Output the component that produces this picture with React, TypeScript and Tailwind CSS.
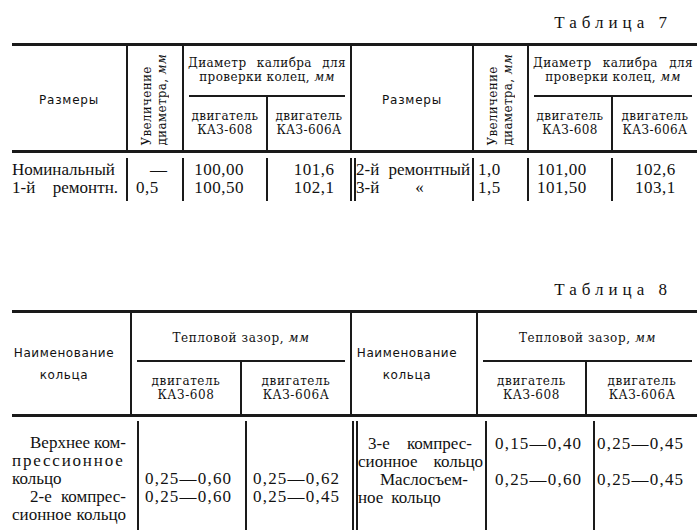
const ink = "border-[#1a1a1a]";

function Head7({ wa, wb, wcd, wc }: { wa: string; wb: string; wcd: string; wc: string }) {
  return (
    <>
      <div className={`${wa} flex shrink-0 items-center justify-center border-r-2 ${ink} pt-[3px] font-['DejaVu_Sans',sans-serif] text-[12px] tracking-[0.8px]`}>
        Размеры
      </div>
      <div className={`${wb} flex shrink-0 items-end justify-center border-r-2 ${ink} pb-[4px]`}>
        <div className="rotate-180 font-['DejaVu_Serif',serif] text-[12px] leading-[15px] tracking-[0.3px] [writing-mode:vertical-rl]">
          <div>Увеличение</div>
          <div>
            диаметра, <i>мм</i>
          </div>
        </div>
      </div>
      <div className={`${wcd} flex flex-col font-['DejaVu_Serif',serif] text-[12px] leading-[14px] tracking-[0.4px]`}>
        <div className="flex h-[49px] flex-col justify-center px-[4px] pb-[2px]">
          <div className="flex justify-between">
            <span>Диаметр</span>
            <span>калибра</span>
            <span>для</span>
          </div>
          <div className="text-center">
            проверки колец, <i>мм</i>
          </div>
        </div>
        <div className="mx-[5px] h-[1.5px] bg-[#1a1a1a]" />
        <div className="flex flex-1">
          <div className={`${wc} flex flex-col items-center justify-center border-r-2 ${ink}`}>
            <span>двигатель</span>
            <span>КАЗ-608</span>
          </div>
          <div className="flex flex-1 flex-col items-center justify-center">
            <span>двигатель</span>
            <span>КАЗ-606А</span>
          </div>
        </div>
      </div>
    </>
  );
}

function Head8({ wa, wbc, wc }: { wa: string; wbc: string; wc: string }) {
  return (
    <>
      <div className={`${wa} flex shrink-0 flex-col items-center justify-center border-r-2 ${ink} pr-[14px] font-['DejaVu_Sans',sans-serif] text-[12px] leading-[22px] tracking-[0.6px]`}>
        <span>Наименование</span>
        <span>кольца</span>
      </div>
      <div className={`${wbc} flex flex-col font-['DejaVu_Serif',serif] text-[12px] leading-[14px] tracking-[0.6px]`}>
        <div className="flex h-[47px] items-center justify-center pt-[2px]">
          <span>
            Тепловой зазор, <i>мм</i>
          </span>
        </div>
        <div className="mx-[5px] h-[1.5px] bg-[#1a1a1a]" />
        <div className="flex flex-1">
          <div className={`${wc} flex flex-col items-center justify-center border-r-2 ${ink}`}>
            <span>двигатель</span>
            <span>КАЗ-608</span>
          </div>
          <div className="flex flex-1 flex-col items-center justify-center">
            <span>двигатель</span>
            <span>КАЗ-606А</span>
          </div>
        </div>
      </div>
    </>
  );
}

function Title({ n, h }: { n: number; h: string }) {
  return (
    <div className={`${h} flex items-end justify-end pb-[10px] pr-[28px]`}>
      <span className="text-[17px] leading-[20px] tracking-[5px]">Таблица {n}</span>
    </div>
  );
}

export default function App() {
  return (
    <div className="h-[530px] w-[700px] overflow-hidden bg-white font-['Liberation_Serif',serif] text-[#111]">
      <Title n={7} h="h-[43px]" />
      <div className="ml-[12px] w-[685px]">
        <div className={`flex h-[110px] border-y-[3px] ${ink}`}>
          <Head7 wa="w-[116px]" wb="w-[56px]" wcd="w-[168px] shrink-0 border-r-2 border-[#1a1a1a]" wc="w-[84px]" />
          <Head7 wa="w-[122px]" wb="w-[55px]" wcd="flex-1" wc="w-[84px]" />
        </div>
        <div className="flex h-[48px] pt-[5px] text-[17px] leading-[18px]">
          <div className={`w-[116px] shrink-0 border-r-2 ${ink} pr-[8px] pt-[3px]`}>
            <div>Номинальный</div>
            <div className="flex justify-between">
              <span>1-й</span>
              <span>ремонтн.</span>
            </div>
          </div>
          <div className={`w-[56px] shrink-0 border-r-2 ${ink} pl-[8px] pt-[3px]`}>
            <div className="pl-[14px]">—</div>
            <div className="tracking-[0.5px]">0,5</div>
          </div>
          <div className={`w-[84px] shrink-0 border-r-2 ${ink} pr-[12px] pt-[3px] text-center tracking-[0.5px]`}>
            <div>100,00</div>
            <div>100,50</div>
          </div>
          <div className={`w-[88px] shrink-0 border-r-[6px] border-double ${ink} pl-[10px] pt-[3px] text-center tracking-[0.5px]`}>
            <div>101,6</div>
            <div>102,1</div>
          </div>
          <div className={`w-[118px] shrink-0 border-r-2 ${ink} pr-[2px] pt-[3px]`}>
            <div className="flex justify-between">
              <span>2-й</span>
              <span>ремонтный</span>
            </div>
            <div className="flex">
              <span>3-й</span>
              <span className="ml-[36px]">«</span>
            </div>
          </div>
          <div className={`w-[55px] shrink-0 border-r-2 ${ink} pl-[4px] pt-[3px] tracking-[0.5px]`}>
            <div>1,0</div>
            <div>1,5</div>
          </div>
          <div className={`w-[84px] shrink-0 border-r-2 ${ink} pl-[8px] pt-[3px] tracking-[0.5px]`}>
            <div>101,00</div>
            <div>101,50</div>
          </div>
          <div className="flex-1 pl-[22px] pt-[3px] tracking-[0.5px]">
            <div>102,6</div>
            <div>103,1</div>
          </div>
        </div>
      </div>

      <Title n={8} h="h-[109px]" />
      <div className="ml-[12px] w-[685px]">
        <div className={`flex h-[107px] border-y-[3px] ${ink}`}>
          <Head8 wa="w-[120px]" wbc="w-[220px] shrink-0 border-r-2 border-[#1a1a1a]" wc="w-[110px]" />
          <Head8 wa="w-[126px]" wbc="flex-1" wc="w-[109px]" />
        </div>
        <div className="flex h-[113px] pt-[4px] text-[17px] leading-[18px]">
          <div className={`w-[127px] shrink-0 border-r-2 ${ink} pr-[11px] pt-[13px]`}>
            <div className="flex justify-between pl-[18px]">
              <span>Верхнее</span>
              <span>ком-</span>
            </div>
            <div className="tracking-[1.8px]">прессионное</div>
            <div>кольцо</div>
            <div className="flex justify-between pl-[18px]">
              <span>2-е</span>
              <span>компрес-</span>
            </div>
            <div className="flex justify-between">
              <span>сионное</span>
              <span>кольцо</span>
            </div>
          </div>
          <div className={`w-[108px] shrink-0 border-r-2 ${ink} pl-[6px] pt-[49px] tracking-[1.2px]`}>
            <div>0,25—0,60</div>
            <div>0,25—0,60</div>
          </div>
          <div className={`w-[111px] shrink-0 border-r-[6px] border-double ${ink} pl-[6px] pt-[49px] tracking-[1.2px]`}>
            <div>0,25—0,62</div>
            <div>0,25—0,45</div>
          </div>
          <div className={`w-[129px] shrink-0 border-r-2 ${ink} pr-[2px] pt-[14px]`}>
            <div className="flex justify-between pl-[10px] pr-[11px]">
              <span>3-е</span>
              <span>компрес-</span>
            </div>
            <div className="flex justify-between">
              <span>сионное</span>
              <span>кольцо</span>
            </div>
            <div className="pl-[22px]">Маслосъем-</div>
            <div className="flex gap-[8px]">
              <span>ное</span>
              <span>кольцо</span>
            </div>
          </div>
          <div className={`w-[108px] shrink-0 border-r-2 ${ink} pl-[8px] pt-[14px] tracking-[1.2px]`}>
            <div>0,15—0,40</div>
            <div className="mt-[18px]">0,25—0,60</div>
          </div>
          <div className="flex-1 pl-[2px] pt-[14px] tracking-[1.2px]">
            <div>0,25—0,45</div>
            <div className="mt-[18px]">0,25—0,45</div>
          </div>
        </div>
      </div>
    </div>
  );
}
